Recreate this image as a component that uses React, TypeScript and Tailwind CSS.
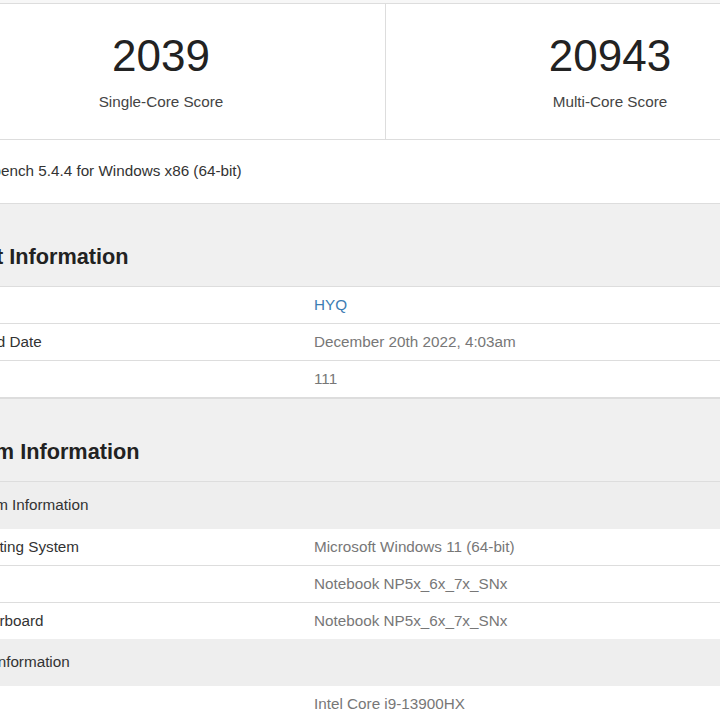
import React from "react";

type Row = { label: string; value: string; link?: boolean };

const resultRows: Row[] = [
  { label: "User", value: "HYQ", link: true },
  { label: "Upload Date", value: "December 20th 2022, 4:03am" },
  { label: "Views", value: "111" },
];

function InfoRow({ row, first }: { row: Row; first?: boolean }) {
  return (
    <div className={`flex items-center bg-white ${first ? "h-[36px]" : "h-[37px] border-t border-[#dddddd]"}`}>
      <div className="w-[377px] pl-[20px] text-[#333333]">{row.label}</div>
      <div className={row.link ? "text-[#3d7db3]" : "text-[#777777]"}>{row.value}</div>
    </div>
  );
}

function SubHeader({ title }: { title: string }) {
  return (
    <div className="flex h-[47px] items-center bg-[#eeeeee] pl-[20px] text-[#333333]">{title}</div>
  );
}

function SectionTitle({ title }: { title: string }) {
  return (
    <h2 className="pt-[40px] pb-[16px] text-[21.7px] leading-[26px] font-bold text-[#222222]">{title}</h2>
  );
}

export default function App() {
  return (
    <div className="w-[720px] h-[720px] overflow-hidden bg-[#f0f0f0] font-['Liberation_Sans',Arial,sans-serif] text-[15.25px]">
      <div className="ml-[-63px] w-[897px]">
        <div className="h-[3px] bg-[#f7f7f7]" />

        {/* scores */}
        <div className="flex h-[137px] border-y border-[#dddddd] bg-white">
          <div className="flex w-[449px] flex-col items-center border-r border-[#dddddd] pt-[30px]">
            <div className="text-[44px] leading-[44px] text-[#222222]">2039</div>
            <div className="mt-[15px] leading-[18px] text-[#444444]">Single-Core Score</div>
          </div>
          <div className="flex flex-1 flex-col items-center pt-[30px]">
            <div className="text-[44px] leading-[44px] text-[#222222]">20943</div>
            <div className="mt-[15px] leading-[18px] text-[#444444]">Multi-Core Score</div>
          </div>
        </div>
        <div className="flex h-[64px] items-center border-b border-[#dddddd] bg-white pl-[19px] text-[#333333]">
          Geekbench 5.4.4 for Windows x86 (64-bit)
        </div>

        <SectionTitle title="Result Information" />
        <div className="border-t border-b-2 border-[#dddddd]">
          {resultRows.map((r, i) => (
            <InfoRow key={r.label} row={r} first={i === 0} />
          ))}
        </div>

        <SectionTitle title="System Information" />
        <div className="border-t border-[#dddddd]">
          <SubHeader title="System Information" />
          <InfoRow row={{ label: "Operating System", value: "Microsoft Windows 11 (64-bit)" }} first />
          <InfoRow row={{ label: "Model", value: "Notebook NP5x_6x_7x_SNx" }} />
          <InfoRow row={{ label: "Motherboard", value: "Notebook NP5x_6x_7x_SNx" }} />
          <SubHeader title="CPU Information" />
          <InfoRow row={{ label: "Name", value: "Intel Core i9-13900HX" }} first />
        </div>
      </div>
    </div>
  );
}
